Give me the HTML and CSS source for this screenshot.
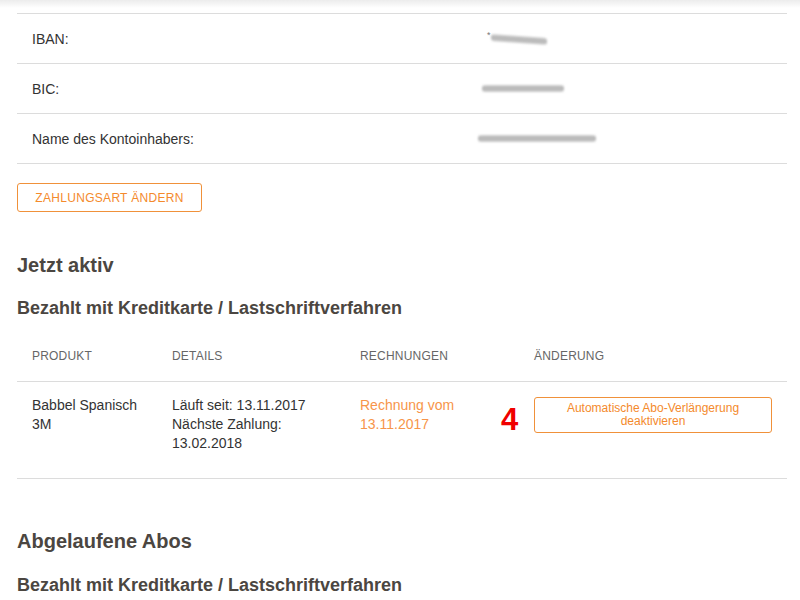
FILE: index.html
```html
<!DOCTYPE html>
<html lang="de">
<head>
<meta charset="utf-8">
<title>Abos</title>
<link rel="stylesheet" href="styles.css">
</head>
<body>
<div class="topshade"></div>
<main class="page">
  <div class="bank">
    <div class="bank-row"><span class="bank-label">IBAN:</span><span class="star">*</span><span class="blur blur-iban"></span></div>
    <div class="bank-row"><span class="bank-label">BIC:</span><span class="blur blur-bic"></span></div>
    <div class="bank-row"><span class="bank-label">Name des Kontoinhabers:</span><span class="blur blur-name"></span></div>
  </div>
  <button class="btn-outline">ZAHLUNGSART ÄNDERN</button>

  <h2 class="section-title first">Jetzt aktiv</h2>
  <h3 class="sub-title">Bezahlt mit Kreditkarte / Lastschriftverfahren</h3>

  <div class="subs">
    <div class="subs-head">
      <div class="c1">PRODUKT</div>
      <div class="c2">DETAILS</div>
      <div class="c3">RECHNUNGEN</div>
      <div class="c4">ÄNDERUNG</div>
    </div>
    <div class="subs-row">
      <div class="c1">Babbel Spanisch<br>3M</div>
      <div class="c2">Läuft seit: 13.11.2017<br>Nächste Zahlung:<br>13.02.2018</div>
      <div class="c3"><a class="invoice">Rechnung vom<br>13.11.2017</a><span class="marker">4</span></div>
      <div class="c4"><button class="btn-renew">Automatische Abo-Verlängerung<br>deaktivieren</button></div>
    </div>
  </div>

  <h2 class="section-title second">Abgelaufene Abos</h2>
  <h3 class="sub-title last">Bezahlt mit Kreditkarte / Lastschriftverfahren</h3>
</main>
</body>
</html>
```
FILE: styles.css
```css
html, body {
  margin: 0;
  padding: 0;
  background: #fff;
}
body {
  font-family: "Liberation Sans", Arial, sans-serif;
  color: #333;
  font-size: 14px;
  overflow: hidden;
  height: 600px;
}
.topshade {
  position: absolute;
  top: 0;
  left: 0;
  right: 0;
  height: 8px;
  background: linear-gradient(#ececec, rgba(255,255,255,0));
}
.page {
  padding: 13px 13px 0 17px;
}
.bank {
  border-top: 1px solid #dcdcdc;
}
.bank-row {
  display: flex;
  align-items: center;
  height: 49px;
  border-bottom: 1px solid #dcdcdc;
  padding-left: 15px;
}
.bank-label {
  width: 446px;
  color: #333;
}
.star {
  margin-left: 9px;
  margin-top: -6px;
  font-size: 9px;
  line-height: 9px;
  color: #777;
}
.blur {
  display: inline-block;
  height: 7px;
  background: linear-gradient(#d0d0d0, #b4b4b4 50%, #cfcfcf);
  filter: blur(1.3px);
  border-radius: 3px;
}
.blur-iban { width: 56px; margin-left: 0; margin-top: 2px; transform: skewY(4deg); }
.blur-bic { width: 82px; margin-left: 4px; margin-top: 0; }
.blur-name { width: 118px; margin-left: 0; margin-top: 0; }

.btn-outline {
  display: block;
  margin-top: 19px;
  width: 185px;
  height: 29px;
  border: 1px solid #f0913a;
  border-radius: 3px;
  background: #fff;
  color: #f48a2c;
  font-family: "Liberation Sans", Arial, sans-serif;
  font-size: 12px;
  letter-spacing: 0.3px;
  padding: 0;
}
.section-title {
  margin: 0;
  font-size: 20px;
  line-height: 24px;
  font-weight: bold;
  color: #4b4641;
}
.section-title.first { margin-top: 41px; }
.section-title.second { margin-top: 50px; }
.sub-title {
  margin: 20px 0 0;
  font-size: 18px;
  line-height: 22px;
  font-weight: bold;
  color: #4b4641;
}
.sub-title.last { margin-top: 21px; }
.subs {
  margin-top: 17px;
  width: 770px;
}
.subs-head, .subs-row {
  display: grid;
  grid-template-columns: 140px 188px 174px 268px;
}
.subs-head > div {
  padding: 13px 15px 18px;
  font-size: 12px;
  line-height: 14px;
  color: #666;
  letter-spacing: 0.2px;
  border-bottom: 1px solid #dcdcdc;
}
.subs-row > div {
  padding: 15px 15px 25px;
  line-height: 19px;
  font-size: 14px;
  border-bottom: 1px solid #dcdcdc;
}
.subs-row .c1, .subs-row .c2 { padding-top: 14px; }
.subs-row .c3 {
  position: relative;
  padding-top: 14px;
}
.invoice {
  color: #f7954a;
  cursor: pointer;
}
.marker {
  position: absolute;
  left: 156px;
  top: 22px;
  color: #f00000;
  font-size: 31px;
  font-weight: bold;
  line-height: 31px;
}
.btn-renew {
  display: block;
  width: 238px;
  height: 36px;
  border: 1px solid #f0913a;
  border-radius: 3px;
  background: #fff;
  color: #f48a2c;
  font-family: "Liberation Sans", Arial, sans-serif;
  font-size: 12px;
  line-height: 13px;
  padding: 0;
  text-align: center;
}
```
